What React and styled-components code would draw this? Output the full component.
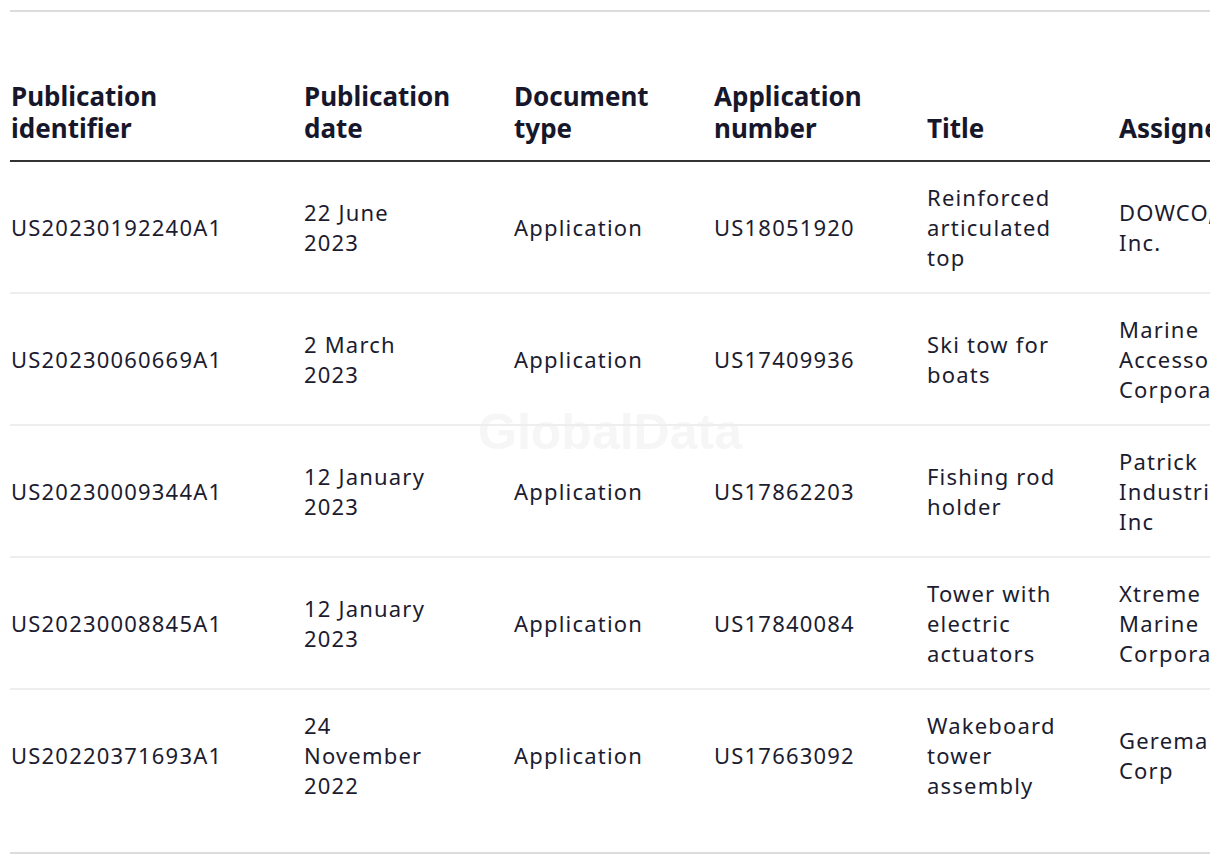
import React from "react"
import styled, { createGlobalStyle } from "styled-components"

const GlobalStyle = createGlobalStyle`
  body {
    margin: 0;
    background: #fff;
    font-family: "Noto Sans", "Liberation Sans", sans-serif;
  }
`

const Wrapper = styled.div`
  position: relative;
  margin: 10px 10px 0;
  width: 1200px;
  overflow: hidden;
  border-top: 2px solid #dcdcdc;
  border-bottom: 2px solid #dcdcdc;
  padding-top: 68px;
  padding-bottom: 32px;
`

const Watermark = styled.div`
  position: absolute;
  left: 0;
  right: 0;
  top: 391px;
  text-align: center;
  font-family: "Liberation Sans", sans-serif;
  font-weight: 700;
  font-size: 50px;
  color: #f6f6f6;
  pointer-events: none;
`

const Table = styled.table`
  position: relative;
  border-collapse: collapse;
  table-layout: fixed;
  width: 1400px;
  color: #17172b;
`

const Head = styled.th`
  text-align: left;
  vertical-align: bottom;
  font-size: 26px;
  line-height: 32px;
  font-weight: 700;
  padding: 0 ${(p) => p.$pad}px 16px 1px;
  border-bottom: 2px solid #333;
`

const Row = styled.tr`
  & + & td {
    border-top: 2px solid #eeeeee;
  }
`

const Cell = styled.td`
  font-size: 22px;
  line-height: 30px;
  letter-spacing: 1.2px;
  padding: 20px ${(p) => p.$pad}px 20px 1px;
  vertical-align: middle;
  height: 90px;
  color: #1c1c30;
`

const columns = [
  { label: "Publication identifier", width: 293, wrap: 230 },
  { label: "Publication date", width: 210, wrap: 130 },
  { label: "Document type", width: 200, wrap: 130 },
  { label: "Application number", width: 213, wrap: 155 },
  { label: "Title", width: 192, wrap: 136 },
  { label: "Assignee", width: 292, wrap: 130 },
]

const rows = [
  ["US20230192240A1", "22 June 2023", "Application", "US18051920", "Reinforced articulated top", "DOWCO, Inc."],
  ["US20230060669A1", "2 March 2023", "Application", "US17409936", "Ski tow for boats", "Marine Accessories Corporation"],
  ["US20230009344A1", "12 January 2023", "Application", "US17862203", "Fishing rod holder", "Patrick Industries, Inc"],
  ["US20230008845A1", "12 January 2023", "Application", "US17840084", "Tower with electric actuators", "Xtreme Marine Corporation"],
  ["US20220371693A1", "24 November 2022", "Application", "US17663092", "Wakeboard tower assembly", "Geremann Corp"],
]

const App = () => {
  return (
    <>
      <GlobalStyle />
      <Wrapper>
        <Watermark>GlobalData</Watermark>
        <Table>
          <colgroup>
            {columns.map((c) => (
              <col key={c.label} style={{ width: c.width }} />
            ))}
          </colgroup>
          <thead>
            <tr>
              {columns.map((c) => (
                <Head key={c.label} $pad={c.width - c.wrap}>
                  {c.label}
                </Head>
              ))}
            </tr>
          </thead>
          <tbody>
            {rows.map((r) => (
              <Row key={r[0]}>
                {r.map((v, i) => (
                  <Cell key={i} $pad={columns[i].width - columns[i].wrap}>
                    {v}
                  </Cell>
                ))}
              </Row>
            ))}
          </tbody>
        </Table>
      </Wrapper>
    </>
  )
}

export default App
